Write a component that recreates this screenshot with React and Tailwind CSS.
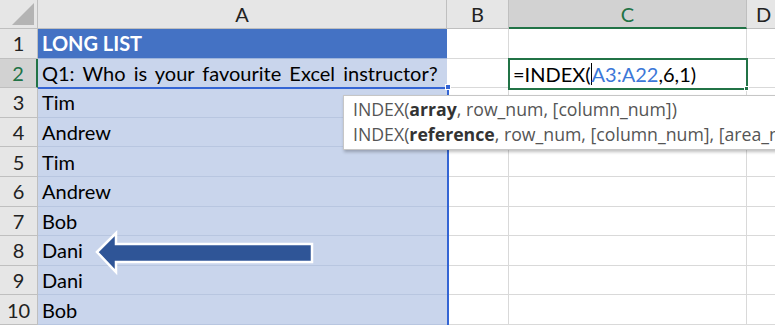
import React from 'react';

const rows = [
  'LONG LIST',
  'Q1: Who is your favourite Excel instructor?',
  'Tim',
  'Andrew',
  'Tim',
  'Andrew',
  'Bob',
  'Dani',
  'Dani',
  'Bob',
];

const font = { fontFamily: 'Lato, "Open Sans", sans-serif' };

export default function App() {
  return (
    <div className="relative w-[775px] h-[325px] overflow-hidden bg-white text-black" style={font}>
      {/* Column headers */}
      <div className="flex h-[29px] bg-[#e6e6e6] border-b border-[#bfbfbf] text-[20px] text-[#222]">
        <div className="relative w-[38px] shrink-0 border-r border-[#bfbfbf]">
          <div className="absolute right-[3px] bottom-[3px] w-0 h-0 border-l-[22px] border-l-transparent border-b-[22px] border-b-[#b4b4b4]" />
        </div>
        <div className="w-[409px] shrink-0 border-r border-[#bfbfbf] flex items-center justify-center">A</div>
        <div className="w-[62px] shrink-0 border-r border-[#bfbfbf] flex items-center justify-center">B</div>
        <div className="w-[238px] shrink-0 bg-[#d2d2d2] text-[#217346] border-r border-[#bfbfbf] border-b-2 border-b-[#217346] -mb-px flex items-center justify-center">C</div>
        <div className="flex-1 flex items-center pl-[9px]">D</div>
      </div>

      {/* Rows */}
      {rows.map((text, i) => {
        const r = i + 1;
        const active = r === 2;
        return (
          <div key={r} className="flex h-[29.6px] text-[20px]">
            <div
              className={
                active
                  ? 'w-[38px] shrink-0 bg-[#d2d2d2] text-[#217346] border-r-2 border-r-[#217346] border-b border-[#bfbfbf] flex items-center justify-center'
                  : 'w-[38px] shrink-0 bg-[#e6e6e6] text-[#222] border-r border-b border-[#bfbfbf] flex items-center justify-center'
              }
            >
              {r}
            </div>
            <div
              className={
                r === 1
                  ? 'w-[409px] shrink-0 bg-[#4472c4] text-white font-bold flex items-center pl-[4px] border-b border-[#9fb5dc]'
                  : active
                  ? 'w-[409px] shrink-0 bg-[#c9d5ec] flex items-center pl-[4px] border-b border-[#b8c6e0] whitespace-nowrap [word-spacing:3px]'
                  : 'w-[409px] shrink-0 bg-[#c9d5ec] flex items-center pl-[4px] border-b border-[#b8c6e0] whitespace-nowrap'
              }
            >
              {text}
            </div>
            <div className="w-[62px] shrink-0 border-r border-b border-[#d9d9d9]" />
            <div className="relative w-[238px] shrink-0 border-r border-b border-[#d9d9d9]">
              {active && (
                <div className="absolute -left-px -top-px w-[240px] h-[32px] border-2 border-[#217346] flex items-center pl-[3px] whitespace-nowrap bg-white z-10">
                  =INDEX(<span className="inline-block w-px h-[22px] bg-black" />
                  <span className="text-[#3c78d8]">A3:A22</span>,6,1)
                  <div className="absolute right-[-3px] bottom-[-3px] w-[5px] h-[5px] bg-[#217346] border border-white" />
                </div>
              )}
            </div>
            <div className="flex-1 border-b border-[#d9d9d9]" />
          </div>
        );
      })}

      {/* Reference range border A3:A22 */}
      <div className="absolute left-[38px] top-[87px] w-[411px] h-[260px] border-t-2 border-r-2 border-[#3465d4]" />
      <div className="absolute left-[445px] top-[84px] w-[6px] h-[6px] bg-[#3465d4] border border-white" />

      {/* Function tooltip */}
      <div className="absolute left-[343px] top-[95px] w-[460px] h-[55px] bg-white border border-[#c6c6c6] shadow-[1px_2px_3px_rgba(0,0,0,0.25)] pl-[9px] pt-[1px] text-[17.7px] text-[#555] leading-[25px] whitespace-nowrap" style={{ fontFamily: '"Open Sans", sans-serif' }}>
        <div>
          INDEX(<span className="font-bold text-[#333]">array</span>, row_num, [column_num])
        </div>
        <div>
          INDEX(<span className="font-bold text-[#333]">reference</span>, row_num, [column_num], [area_num])
        </div>
      </div>

      {/* Arrow */}
      <svg className="absolute left-[90px] top-[228px]" width="230" height="50" viewBox="0 0 230 50">
        <polygon
          points="7,24 26,5 26,16 222,16 222,34 26,34 26,44"
          fill="#2f5597"
          stroke="#ffffff"
          strokeWidth="2.5"
          strokeLinejoin="miter"
        />
      </svg>
    </div>
  );
}
